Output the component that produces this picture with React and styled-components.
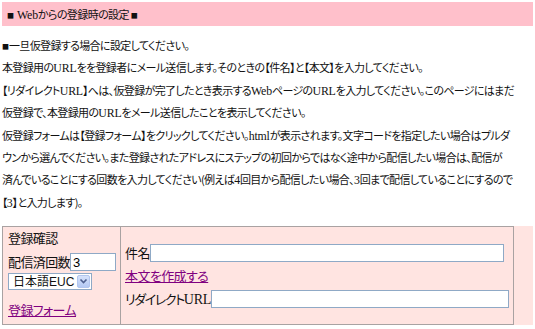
import React from 'react';
import styled, { createGlobalStyle } from 'styled-components';

const GlobalStyle = createGlobalStyle`
  body {
    margin: 0;
    background: #fff;
    color: #111;
    font-family: "Noto Sans CJK JP", sans-serif;
    font-feature-settings: "palt";
  }
`;

const Page = styled.div`
  padding: 2px;
  width: 531px;
`;

const Title = styled.div`
  background: #ffc0cb;
  height: 24px;
  line-height: 24px;
  padding-left: 5px;
  font-size: 11px;
  letter-spacing: -0.6px;
`;

const Notes = styled.div`
  margin-top: 8px;
  font-size: 11px;
  letter-spacing: -0.65px;
  white-space: nowrap;
`;

const NoteLine = styled.div`
  height: 22.4px;
  line-height: 22.4px;
`;

// small black square used as a bullet
const Mark = styled.span`
  font-size: 7px;
  letter-spacing: 0;
  vertical-align: 1px;
  margin-right: ${props => props.tight ? 0 : 3}px;
`;

// latin words in the copy are set in a serif face
const Latin = styled.span`
  font-family: "Liberation Serif", serif;
  font-size: 1.08em;
  letter-spacing: -0.2px;
  line-height: 1;
`;

const Box = styled.div`
  margin-top: 13px;
  background: #ffe4e1;
`;

const Table = styled.table`
  width: 512px;
  table-layout: fixed;
  border-collapse: collapse;
  background: #ffe4e1;
  border: 1px solid #9d9797;
  font-size: 13px;
  letter-spacing: -0.6px;
`;

const Cell = styled.td`
  border: 1px solid #a9a2a2;
  padding: ${props => props.side ? '1px 5px 4px' : '0 4px'};
  vertical-align: ${props => props.side ? 'top' : 'middle'};
`;

const Line = styled.div`
  display: flex;
  align-items: center;
  line-height: 20px;
  margin-top: ${props => props.gap || 0}px;
  letter-spacing: ${props => props.tight ? '-1.4px' : 'inherit'};
  white-space: nowrap;
`;

const Input = styled.input`
  box-sizing: border-box;
  width: ${props => props.w}px;
  height: 18px;
  border: 1px solid #8fa9c6;
  padding: 0 2px;
  font-family: "Liberation Sans", Arial, sans-serif;
  font-size: 13px;
  letter-spacing: 0;
  color: #000;
  background: #fff;
  outline: none;
`;

const Select = styled.span`
  box-sizing: border-box;
  display: flex;
  align-items: center;
  justify-content: space-between;
  width: 84px;
  height: 17px;
  border: 1px solid #8fa9c6;
  background: #fff;
  padding: 0 1px 0 4px;
  font-family: "Liberation Sans", "Noto Sans CJK JP", sans-serif;
  font-feature-settings: normal;
  font-size: 12px;
  letter-spacing: 0;
  line-height: 14px;
`;

const Arrow = styled.span`
  display: flex;
  align-items: center;
  justify-content: center;
  flex: none;
  width: 13px;
  height: 13px;
  border-radius: 2px;
  background: linear-gradient(#d6e2fb, #b4c9f3);
  border: 1px solid #b3c6ee;
  box-sizing: border-box;
`;

const Link = styled.a`
  color: #800080;
  text-decoration: underline;
  cursor: pointer;
`;

export default function App() {
  return (
    <>
      <GlobalStyle />
      <Page>
        <Title><Mark>■</Mark><Latin>Web</Latin>からの登録時の設定 <Mark>■</Mark></Title>
        <Notes>
          <NoteLine><Mark tight>■</Mark>一旦仮登録する場合に設定してください。</NoteLine>
          <NoteLine>本登録用の<Latin>URL</Latin>をを登録者にメール送信します。そのときの【件名】と【本文】を入力してください。</NoteLine>
          <NoteLine>【リダイレクト<Latin>URL</Latin>】へは、仮登録が完了したとき表示する<Latin>Web</Latin>ページの<Latin>URL</Latin>を入力してください。このページにはまだ</NoteLine>
          <NoteLine>仮登録で、本登録用の<Latin>URL</Latin>をメール送信したことを表示してください。</NoteLine>
          <NoteLine>仮登録フォームは【登録フォーム】をクリックしてください。<Latin>html</Latin>が表示されます。文字コードを指定したい場合はプルダ</NoteLine>
          <NoteLine>ウンから選んでください。また登録されたアドレスにステップの初回からではなく途中から配信したい場合は、配信が</NoteLine>
          <NoteLine>済んでいることにする回数を入力してください(例えば<Latin>4</Latin>回目から配信したい場合、<Latin>3</Latin>回まで配信していることにするので</NoteLine>
          <NoteLine>【<Latin>3</Latin>】と入力します)。</NoteLine>
        </Notes>
        <Box>
          <Table>
            <colgroup>
              <col style={{ width: '118px' }} />
              <col />
            </colgroup>
            <tbody>
              <tr>
                <Cell side>
                  <Line>登録確認</Line>
                  <Line gap={4}>配信済回数<Input w={46} defaultValue="3" /></Line>
                  <Line gap={1}>
                    <Select>
                      日本語EUC
                      <Arrow>
                        <svg width="9" height="7" viewBox="0 0 9 7">
                          <path d="M1.5 1.5 L4.5 4.5 L7.5 1.5" fill="none" stroke="#4d5f8e" strokeWidth="1.6" />
                        </svg>
                      </Arrow>
                    </Select>
                  </Line>
                  <Line gap={10}><Link>登録フォーム</Link></Line>
                </Cell>
                <Cell>
                  <Line>件名<Input w={354} /></Line>
                  <Line gap={3}><Link>本文を作成する</Link></Line>
                  <Line gap={3} tight>リダイレクト<Latin>URL</Latin><Input w={299} /></Line>
                </Cell>
              </tr>
            </tbody>
          </Table>
        </Box>
      </Page>
    </>
  );
}
